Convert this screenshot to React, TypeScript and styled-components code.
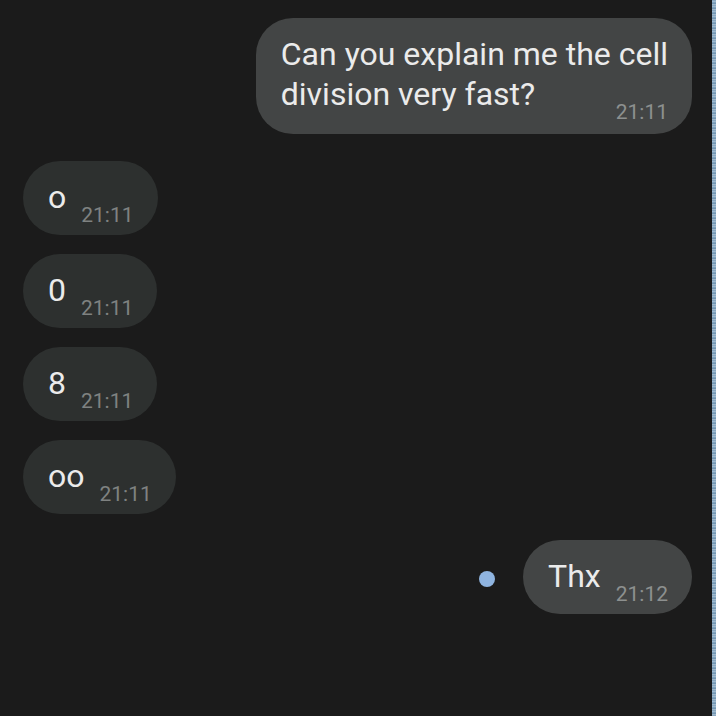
import * as React from "react"
import styled, {createGlobalStyle} from "styled-components"

const GlobalStyle = createGlobalStyle`
  html, body {
    margin: 0;
    padding: 0;
    background: #1b1b1b;
  }
  body {
    font-family: Roboto, "Noto Sans", "Liberation Sans", sans-serif;
  }
`

const Screen = styled.div`
  display: flex;
  width: 716px;
  height: 716px;
  overflow: hidden;
  background: #1b1b1b;
`

const Thread = styled.div`
  flex: 1;
  display: flex;
  flex-direction: column;
  padding: 18px 20px 0 23px;
`

// the thin noisy blue edge on the right of the screenshot
const EdgeStrip = styled.div`
  width: 4px;
  background: repeating-linear-gradient(
    180deg,
    #7d9db8 0px,
    #a9c3d6 2px,
    #5f86a6 3px,
    #b7cad8 5px
  );
`

const Row = styled.div<{$out?: boolean; $gap?: number}>`
  display: flex;
  align-items: center;
  justify-content: ${p => (p.$out ? "flex-end" : "flex-start")};
  margin-top: ${p => p.$gap ?? 19}px;
`

const Bubble = styled.div<{$out?: boolean; $multi?: boolean}>`
  display: flow-root;
  box-sizing: border-box;
  padding: 16px 24px ${p => (p.$multi ? 10 : 8)}px 25px;
  border-radius: 37px;
  background: ${p => (p.$out ? "#434545" : "#2d302f")};
  color: #ebebeb;
  font-size: 32px;
  line-height: 40px;
`

const Time = styled.span<{$out?: boolean}>`
  float: right;
  color: ${p => (p.$out ? "#8d908f" : "#7f8281")};
  font-size: 21px;
  line-height: 24px;
  margin: 26px 0 0 15px;
`

const Dot = styled.span`
  width: 16px;
  height: 16px;
  border-radius: 50%;
  background: #8fb4e0;
  margin: 4px 28px 0 0;
`

interface MessageProps {
  lines: string[]
  time: string
  out?: boolean
}

const Message: React.FC<MessageProps> = ({lines, time, out}) => (
  <Bubble $out={out} $multi={lines.length > 1}>
    {lines.map((l, i) => (
      <React.Fragment key={i}>
        {i > 0 && <br />}
        {l}
      </React.Fragment>
    ))}
    <Time $out={out}>{time}</Time>
  </Bubble>
)

const incoming = ["o", "0", "8", "oo"]

export default function App() {
  return (
    <Screen>
      <GlobalStyle />
      <Thread>
        <Row $out $gap={0}>
          <Message
            out
            lines={["Can you explain me the cell", "division very fast?"]}
            time="21:11"
          />
        </Row>
        {incoming.map((t, i) => (
          <Row key={i} $gap={i === 0 ? 27 : 19}>
            <Message lines={[t]} time="21:11" />
          </Row>
        ))}
        <Row $out $gap={26}>
          <Dot />
          <Message out lines={["Thx"]} time="21:12" />
        </Row>
      </Thread>
      <EdgeStrip />
    </Screen>
  )
}
